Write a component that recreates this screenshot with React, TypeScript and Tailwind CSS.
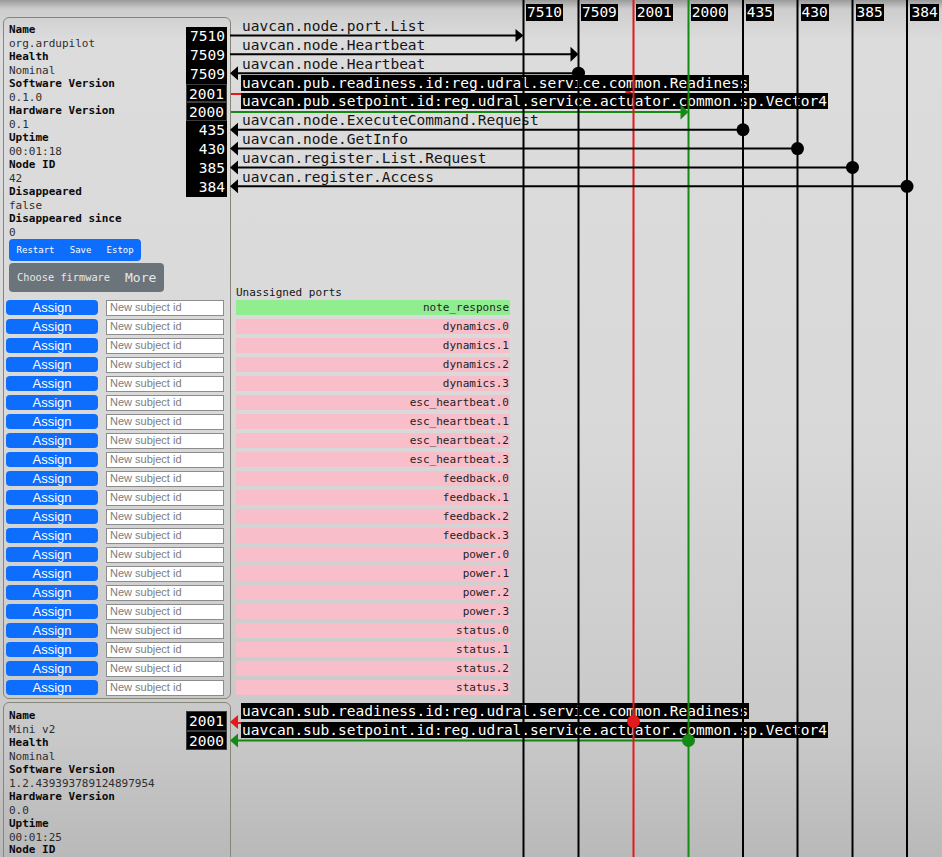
import React from "react";

const MONO = "font-['DejaVu_Sans_Mono',monospace]";
const SANS = "font-['Liberation_Sans',Arial,sans-serif]";

const topRows: { text: string; hl?: boolean }[] = [
  { text: "uavcan.node.port.List" },
  { text: "uavcan.node.Heartbeat" },
  { text: "uavcan.node.Heartbeat" },
  { text: "uavcan.pub.readiness.id:reg.udral.service.common.Readiness", hl: true },
  { text: "uavcan.pub.setpoint.id:reg.udral.service.actuator.common.sp.Vector4", hl: true },
  { text: "uavcan.node.ExecuteCommand.Request" },
  { text: "uavcan.node.GetInfo" },
  { text: "uavcan.register.List.Request" },
  { text: "uavcan.register.Access" },
];

const ports1 = ["7510", "7509", "7509", "2001", "2000", "435", "430", "385", "384"];

const info1: [string, string][] = [
  ["Name", "org.ardupilot"],
  ["Health", "Nominal"],
  ["Software Version", "0.1.0"],
  ["Hardware Version", "0.1"],
  ["Uptime", "00:01:18"],
  ["Node ID", "42"],
  ["Disappeared", "false"],
  ["Disappeared since", "0"],
];

const info2: [string, string][] = [
  ["Name", "Mini v2"],
  ["Health", "Nominal"],
  ["Software Version", "1.2.439393789124897954"],
  ["Hardware Version", "0.0"],
  ["Uptime", "00:01:25"],
];

const unassigned = [
  "note_response",
  "dynamics.0",
  "dynamics.1",
  "dynamics.2",
  "dynamics.3",
  "esc_heartbeat.0",
  "esc_heartbeat.1",
  "esc_heartbeat.2",
  "esc_heartbeat.3",
  "feedback.0",
  "feedback.1",
  "feedback.2",
  "feedback.3",
  "power.0",
  "power.1",
  "power.2",
  "power.3",
  "status.0",
  "status.1",
  "status.2",
  "status.3",
];

const RED = "#e3191b";
const GREEN = "#138a13";

const cols = [
  { x: 523.5, label: "7510", c: "#000" },
  { x: 578.5, label: "7509", c: "#000" },
  { x: 633.5, label: "2001", c: RED },
  { x: 688.5, label: "2000", c: GREEN },
  { x: 743, label: "435", c: "#000" },
  { x: 797.5, label: "430", c: "#000" },
  { x: 852.5, label: "385", c: "#000" },
  { x: 907, label: "384", c: "#000" },
];

const L = (k: number) => 35.5 + 18.85 * k;

const rightArrow = (x: number, y: number, h = 6.5, w = 8) =>
  `${x - w},${y - h} ${x},${y} ${x - w},${y + h}`;
const leftArrow = (x: number, y: number, h = 7, w = 8) =>
  `${x},${y} ${x + w},${y - h} ${x + w},${y + h}`;

function Info({ items }: { items: [string, string][] }) {
  return (
    <>
      {items.map(([k, v], i) => (
        <React.Fragment key={i}>
          <div className="font-bold text-[#0a0a0a] whitespace-nowrap">{k}</div>
          <div className="text-[#2e2e2e] whitespace-nowrap">{v}</div>
        </React.Fragment>
      ))}
    </>
  );
}

function PortBox({ p, h, outlined }: { p: string; h: string; outlined?: boolean }) {
  return (
    <div
      className={`${MONO} ${h} w-[41px] bg-black text-white text-[14.5px] text-right pr-[2px] ${
        outlined ? "border border-[#3c3c3c]" : ""
      }`}
    >
      {p}
    </div>
  );
}

export default function App() {
  return (
    <div className="relative w-[942px] h-[857px] overflow-hidden bg-[linear-gradient(to_bottom,#9a9a9a_0px,#cdcdcd_9px,#dcdcdc_40px,#d9d9d9_420px,#c8c8c8_740px,#b9b9b9_857px)]">
      {/* lower drawing layer (lines that pass behind labels) */}
      <svg className="absolute inset-0 z-0" width={942} height={857}>
        <line x1={230} y1={94} x2={627} y2={94} stroke={RED} strokeWidth={2} />
        <polygon points={rightArrow(633.5, 94, 7)} fill={RED} />
        <line x1={230} y1={112} x2={681} y2={112} stroke={GREEN} strokeWidth={2} />
        <line x1={236} y1={723} x2={633.5} y2={723} stroke={RED} strokeWidth={2} />
        <line x1={236} y1={740.5} x2={688.5} y2={740.5} stroke={GREEN} strokeWidth={2} />
      </svg>

      <div className={`relative z-10 flex ${MONO}`}>
        {/* left column */}
        <div className="w-[231px] shrink-0">
          {/* node panel 1 */}
          <div className="ml-[3px] mt-[17px] w-[228px] rounded-[6px] border border-[#86867a] pb-[3px]">
            <div className="flex">
              <div className="flex-1 pl-[5px] pt-[5px] text-[11px] leading-[13.5px]">
                <Info items={info1} />
              </div>
              <div className="pt-[9px] pr-[3px] flex flex-col">
                {ports1.map((p, i) => (
                  <PortBox key={i} p={p} h="h-[18.85px] leading-[18.85px]" outlined={p === "2001" || p === "2000"} />
                ))}
              </div>
            </div>
            <div className="ml-[5px] flex w-fit h-[22px] rounded-[4px] bg-[#0d6efd] text-white text-[9px] leading-[22px]">
              <span className="px-[7.6px]">Restart</span>
              <span className="px-[7.6px]">Save</span>
              <span className="px-[7.6px]">Estop</span>
            </div>
            <div className="ml-[5px] mt-[2px] flex items-center w-[155px] h-[29px] rounded-[4px] bg-[#6c747b] pl-[8px] text-[#e6e8ea]">
              <span className="text-[10.3px]">Choose firmware</span>
              <span className="ml-[15px] text-[13px]">More</span>
            </div>
            <div className="mt-[8px] flex flex-col gap-[4px]">
              {unassigned.map((_, i) => (
                <div key={i} className="flex items-center h-[15px]">
                  <button
                    className={`${SANS} ml-[2px] w-[92px] h-[15px] rounded-[4px] bg-[#0d6efd] text-white text-[13px] leading-[15px]`}
                  >
                    Assign
                  </button>
                  <input
                    className={`${SANS} ml-[8px] w-[118px] h-[16px] border border-[#8c8c8c] bg-white pl-[3px] text-[11px] text-black placeholder:text-[#7d7d7d] outline-none`}
                    placeholder="New subject id"
                  />
                </div>
              ))}
            </div>
          </div>

          {/* node panel 2 */}
          <div className="ml-[3px] mt-[3px] w-[228px] h-[200px] rounded-[6px] border border-[#86867a]">
            <div className="flex">
              <div className="flex-1 pl-[5px] pt-[6px] text-[11px] leading-[13.5px]">
                <Info items={info2} />
                <div className="font-bold text-[#0a0a0a] whitespace-nowrap leading-[12px]">Node ID</div>
              </div>
              <div className="pt-[8px] pr-[3px] flex flex-col">
                <PortBox p="2001" h="h-[19.5px] leading-[19.5px]" outlined />
                <PortBox p="2000" h="h-[19.5px] leading-[19.5px]" outlined />
              </div>
            </div>
          </div>
        </div>

        {/* right column */}
        <div className="flex-1 pt-[18px]">
          {topRows.map((r, i) => (
            <div key={i} className="flex h-[18.85px] pl-[10px] whitespace-nowrap">
              <span
                className={`block h-[16px] leading-[16px] px-[1px] text-[14.5px] ${
                  r.hl ? "bg-black text-white" : "text-[#151515]"
                }`}
              >
                {r.text}
              </span>
            </div>
          ))}
          <div className="mt-[98.35px] pl-[5px] h-[14px] text-[11px] leading-[14px] text-[#151515]">
            Unassigned ports
          </div>
          <div className="pl-[5px] flex flex-col gap-[4px]">
            {unassigned.map((u, i) => (
              <div
                key={i}
                className={`w-[274px] h-[15px] text-right pr-[1px] text-[11px] leading-[15px] text-[#1e1e1e] ${
                  i === 0 ? "bg-[#90ee90]" : "bg-[#f8bfca]"
                }`}
              >
                {u}
              </div>
            ))}
          </div>
          <div className="mt-[8px]">
            {[
              "uavcan.sub.readiness.id:reg.udral.service.common.Readiness",
              "uavcan.sub.setpoint.id:reg.udral.service.actuator.common.sp.Vector4",
            ].map((t, i) => (
              <div key={i} className="flex h-[18.85px] pl-[10px] whitespace-nowrap">
                <span className="block h-[16px] leading-[16px] px-[1px] text-[14.5px] bg-black text-white">
                  {t}
                </span>
              </div>
            ))}
          </div>
        </div>
      </div>

      {/* upper drawing layer */}
      <svg className="absolute inset-0 z-20 pointer-events-none" width={942} height={857}>
        {cols.map((c, i) => (
          <line key={i} x1={c.x} y1={0} x2={c.x} y2={857} stroke={c.c} strokeWidth={2} />
        ))}
        {/* outgoing */}
        <line x1={230} y1={L(0)} x2={516} y2={L(0)} stroke="#000" strokeWidth={2} />
        <polygon points={rightArrow(523.5, L(0))} fill="#000" />
        <line x1={230} y1={L(1)} x2={571} y2={L(1)} stroke="#000" strokeWidth={2} />
        <polygon points={rightArrow(578.5, L(1), 7.5)} fill="#000" />
        <polygon points={rightArrow(688.5, 112, 7.5)} fill={GREEN} />
        {/* incoming */}
        {[
          { k: 2, x: 578.5 },
          { k: 5, x: 743 },
          { k: 6, x: 797.5 },
          { k: 7, x: 852.5 },
          { k: 8, x: 907 },
        ].map((r) => (
          <g key={r.k}>
            <line x1={236} y1={L(r.k)} x2={r.x} y2={L(r.k)} stroke="#000" strokeWidth={2} />
            <circle cx={r.x} cy={L(r.k)} r={6.5} fill="#000" />
            <polygon points={leftArrow(230, L(r.k))} fill="#000" />
          </g>
        ))}
        <circle cx={633.5} cy={721.5} r={6.5} fill={RED} />
        <polygon points={leftArrow(230, 722)} fill={RED} />
        <circle cx={688.5} cy={740.5} r={6.5} fill={GREEN} />
        <polygon points={leftArrow(230, 740.5)} fill={GREEN} />
      </svg>

      {/* column labels */}
      <div className={`absolute top-0 left-[526px] z-30 flex ${MONO}`}>
        {cols.map((c, i) => (
          <div key={i} className="w-[54.93px] shrink-0">
            <span className="inline-block h-[17px] leading-[17px] px-[1px] bg-black text-white text-[14.5px]">
              {c.label}
            </span>
          </div>
        ))}
      </div>
    </div>
  );
}
